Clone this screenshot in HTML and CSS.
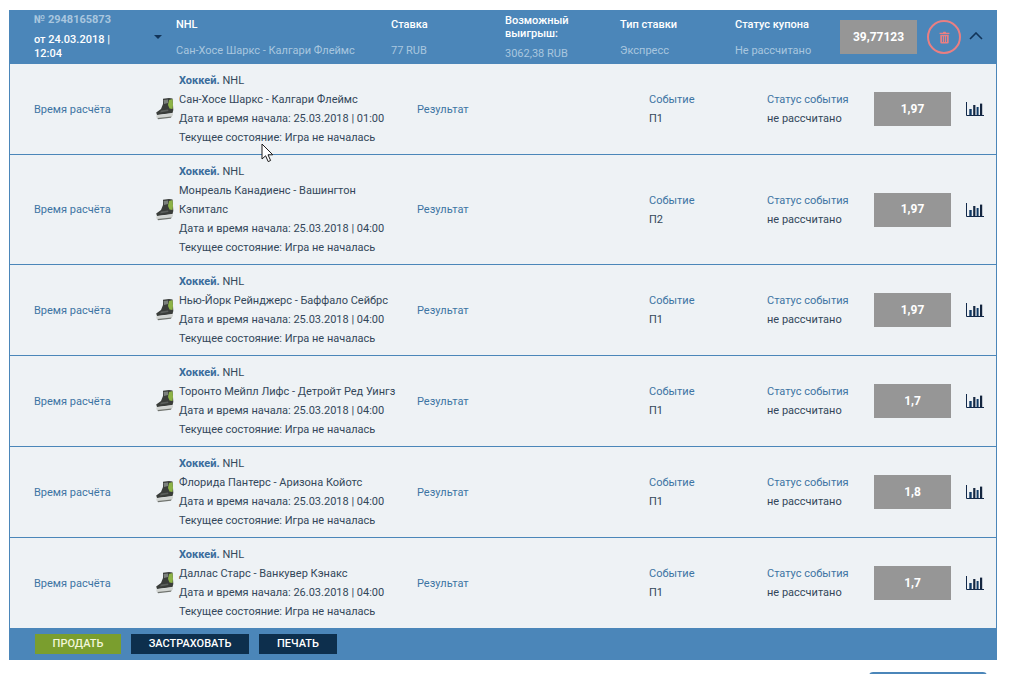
FILE: index.html
```html
<!DOCTYPE html>
<html lang="ru">
<head>
<meta charset="utf-8">
<title>Купон</title>
<link rel="stylesheet" href="styles.css">
</head>
<body>
<svg class="sprites" width="0" height="0" aria-hidden="true">
  <symbol id="skate" viewBox="0 0 22 24">
    <path d="M8 1.8 L14 1 L17.5 1.5 L18 8 L18.3 13 L17.5 16 L2 18 L1.2 15.5 L6 12 L8 7 Z" fill="#3a3d3a"/>
    <path d="M14 3 L17.5 2 L18 8 L17.5 12 L14.5 11.5 L13 8 Z" fill="#8db347"/>
    <path d="M8.5 3 L13 2.5 L13 6 L9 7 Z" fill="#7b807c"/>
    <path d="M6 13.5 L13 12.5 L13.5 14 L5 15.5 Z" fill="#5c605d"/>
    <path d="M1.5 18.2 L18 16.2 L18 18 L16.5 20 L3 21.5 L1.2 20.3 Z" fill="#d2d5d2"/>
    <path d="M2.5 21 L16.5 19.6 L16 20.8 L3 22.2 Z" fill="#70746f"/>
  </symbol>
  <symbol id="chart" viewBox="0 0 18 14">
    <path d="M0.5 0 V13.5 H18" fill="none" stroke="#12294a" stroke-width="1"/>
    <rect x="3.3" y="7" width="2.4" height="6" fill="#0f3a66"/>
    <rect x="7.2" y="3" width="2.2" height="10" fill="#14263f"/>
    <rect x="10.6" y="5" width="2" height="8" fill="#0f3a66"/>
    <rect x="14" y="1.6" width="2.2" height="11.4" fill="#14263f"/>
  </symbol>
</svg>

<main class="coupon">
  <header class="coupon-head">
    <div class="head-num">
      <div class="head-id">№ 2948165873</div>
      <div class="head-date">от 24.03.2018 | 12:04</div>
    </div>
    <div class="head-arrow"><span class="arrow-down"></span></div>
    <div class="head-col head-col-league"><div class="head-title">NHL</div><div class="head-value">Сан-Хосе Шаркс - Калгари Флеймс</div></div>
    <div class="head-col head-col-stake"><div class="head-title">Ставка</div><div class="head-value">77 RUB</div></div>
    <div class="head-col head-col-tall"><div class="head-title">Возможный выигрыш:</div><div class="head-value">3062,38 RUB</div></div>
    <div class="head-col head-col-type"><div class="head-title">Тип ставки</div><div class="head-value">Экспресс</div></div>
    <div class="head-col head-col-status"><div class="head-title">Статус купона</div><div class="head-value">Не рассчитано</div></div>
    <div class="odds-box head-odds">39,77123</div>
    <div class="trash-btn">
      <svg class="trash-icon" viewBox="0 0 12 14"><path d="M4.2 1.9 L4.8 .6 H7.2 L7.8 1.9 H11.4 V3.3 H.6 V1.9 Z" fill="#ea7f82"/><path fill-rule="evenodd" d="M1.4 4 H10.6 V12.4 Q10.6 13.6 9.4 13.6 H2.6 Q1.4 13.6 1.4 12.4 Z M3.3 5.5 V12 H4.2 V5.5 Z M5.55 5.5 V12 H6.45 V5.5 Z M7.8 5.5 V12 H8.7 V5.5 Z" fill="#ea7f82"/></svg>
    </div>
    <svg class="chevron" viewBox="0 0 14 8"><path d="M1 7 L7 1 L13 7" fill="none" stroke="#12355a" stroke-width="1.6"/></svg>
  </header>

  <section class="row">
    <div class="col-time">Время расчёта</div>
    <div class="col-icon"><svg class="skate"><use href="#skate"/></svg></div>
    <div class="col-info"><div><b>Хоккей.</b> NHL</div><div>Сан-Хосе Шаркс - Калгари Флеймс</div><div>Дата и время начала: 25.03.2018 | 01:00</div><div>Текущее состояние: Игра не началась</div></div>
    <div class="col-result">Результат</div>
    <div class="col-event"><div class="label">Событие</div><div>П1</div></div>
    <div class="col-status"><div class="label">Статус события</div><div>не рассчитано</div></div>
    <div class="odds-box">1,97</div>
    <div class="col-chart"><svg class="chart"><use href="#chart"/></svg></div>
  </section>
  <section class="row">
    <div class="col-time">Время расчёта</div>
    <div class="col-icon"><svg class="skate"><use href="#skate"/></svg></div>
    <div class="col-info"><div><b>Хоккей.</b> NHL</div><div>Монреаль Канадиенс - Вашингтон Кэпиталс</div><div>Дата и время начала: 25.03.2018 | 04:00</div><div>Текущее состояние: Игра не началась</div></div>
    <div class="col-result">Результат</div>
    <div class="col-event"><div class="label">Событие</div><div>П2</div></div>
    <div class="col-status"><div class="label">Статус события</div><div>не рассчитано</div></div>
    <div class="odds-box">1,97</div>
    <div class="col-chart"><svg class="chart"><use href="#chart"/></svg></div>
  </section>
  <section class="row">
    <div class="col-time">Время расчёта</div>
    <div class="col-icon"><svg class="skate"><use href="#skate"/></svg></div>
    <div class="col-info"><div><b>Хоккей.</b> NHL</div><div>Нью-Йорк Рейнджерс - Баффало Сейбрс</div><div>Дата и время начала: 25.03.2018 | 04:00</div><div>Текущее состояние: Игра не началась</div></div>
    <div class="col-result">Результат</div>
    <div class="col-event"><div class="label">Событие</div><div>П1</div></div>
    <div class="col-status"><div class="label">Статус события</div><div>не рассчитано</div></div>
    <div class="odds-box">1,97</div>
    <div class="col-chart"><svg class="chart"><use href="#chart"/></svg></div>
  </section>
  <section class="row">
    <div class="col-time">Время расчёта</div>
    <div class="col-icon"><svg class="skate"><use href="#skate"/></svg></div>
    <div class="col-info"><div><b>Хоккей.</b> NHL</div><div>Торонто Мейпл Лифс - Детройт Ред Уингз</div><div>Дата и время начала: 25.03.2018 | 04:00</div><div>Текущее состояние: Игра не началась</div></div>
    <div class="col-result">Результат</div>
    <div class="col-event"><div class="label">Событие</div><div>П1</div></div>
    <div class="col-status"><div class="label">Статус события</div><div>не рассчитано</div></div>
    <div class="odds-box">1,7</div>
    <div class="col-chart"><svg class="chart"><use href="#chart"/></svg></div>
  </section>
  <section class="row">
    <div class="col-time">Время расчёта</div>
    <div class="col-icon"><svg class="skate"><use href="#skate"/></svg></div>
    <div class="col-info"><div><b>Хоккей.</b> NHL</div><div>Флорида Пантерс - Аризона Койотс</div><div>Дата и время начала: 25.03.2018 | 04:00</div><div>Текущее состояние: Игра не началась</div></div>
    <div class="col-result">Результат</div>
    <div class="col-event"><div class="label">Событие</div><div>П1</div></div>
    <div class="col-status"><div class="label">Статус события</div><div>не рассчитано</div></div>
    <div class="odds-box">1,8</div>
    <div class="col-chart"><svg class="chart"><use href="#chart"/></svg></div>
  </section>
  <section class="row row-last">
    <div class="col-time">Время расчёта</div>
    <div class="col-icon"><svg class="skate"><use href="#skate"/></svg></div>
    <div class="col-info"><div><b>Хоккей.</b> NHL</div><div>Даллас Старс - Ванкувер Кэнакс</div><div>Дата и время начала: 26.03.2018 | 04:00</div><div>Текущее состояние: Игра не началась</div></div>
    <div class="col-result">Результат</div>
    <div class="col-event"><div class="label">Событие</div><div>П1</div></div>
    <div class="col-status"><div class="label">Статус события</div><div>не рассчитано</div></div>
    <div class="odds-box">1,7</div>
    <div class="col-chart"><svg class="chart"><use href="#chart"/></svg></div>
  </section>

  <footer class="coupon-foot">
    <button class="btn btn-sell">ПРОДАТЬ</button>
    <button class="btn btn-insure">ЗАСТРАХОВАТЬ</button>
    <button class="btn btn-print">ПЕЧАТЬ</button>
  </footer>
</main>
<div class="next-btn"></div>

<svg class="cursor" viewBox="0 0 14 20"><path d="M1 1 V16 L4.6 12.8 L7.2 18.6 L9.6 17.5 L7 11.8 H11.8 Z" fill="#fff" stroke="#1a1a1a" stroke-width="1"/></svg>
</body>
</html>
```
FILE: styles.css
```css
* { box-sizing: border-box; }
html, body { height: 100%; }
body {
  margin: 0;
  padding: 10px 15px 0 9px;
  overflow: hidden;
  background: #fff;
  font: 11px/19px Roboto, "Liberation Sans", sans-serif;
  color: #33475a;
  position: relative;
}
.sprites { position: absolute; }

.coupon { width: 988px; }

.coupon-head {
  display: flex;
  align-items: center;
  height: 54px;
  padding-left: 25px;
  background: #4b86b9;
  color: #a9c6df;
}
.head-num { width: 100px; line-height: 14px; font-weight: 500; }
.head-id { color: #a9c6df; font-weight: 700; margin-bottom: 6px; }
.head-date { color: #fff; }
.head-arrow { width: 42px; display: flex; justify-content: center; padding-left: 6px; }
.arrow-down {
  width: 0; height: 0;
  border-left: 4px solid transparent;
  border-right: 4px solid transparent;
  border-top: 4px solid #12355a;
}
.head-col { line-height: 13px; }
.head-title { color: #fff; font-weight: 500; margin-bottom: 13px; }
.head-col-league { width: 215px; }
.head-col-stake { width: 114px; }
.head-col-tall { width: 115px; }
.head-col-tall .head-title { margin-bottom: 7px; width: 90px; }
.head-col-type { width: 115px; }
.head-col-status { width: 105px; }

.odds-box {
  flex: none;
  display: flex;
  align-items: center;
  justify-content: center;
  width: 77px;
  height: 34px;
  background: #969696;
  color: #fff;
  font-size: 12px;
  font-weight: 700;
}
.trash-btn {
  flex: none;
  display: flex;
  align-items: center;
  justify-content: center;
  width: 34px;
  height: 34px;
  margin-left: 10px;
  border: 2px solid #ea7f82;
  border-radius: 50%;
}
.trash-icon { width: 11px; height: 13px; }
.chevron { width: 14px; height: 8px; margin: -2px 0 0 8px; }

.row {
  display: flex;
  align-items: center;
  padding: 7px 0 7px 24px;
  background: #eef2f5;
  border-left: 1px solid #4b86b9;
  border-right: 1px solid #4b86b9;
  border-bottom: 1px solid #4b86b9;
}
.row-last { border-bottom: 0; }
.col-time { width: 121px; color: #3d74a3; }
.col-icon { width: 24px; height: 24px; }
.skate { display: block; width: 22px; height: 24px; }
.col-info { width: 238px; padding-right: 16px; }
.col-info b { color: #3a6c9c; font-weight: 700; }
.col-result { width: 232px; color: #3d74a3; }
.col-event { width: 118px; }
.col-status { width: 107px; }
.label { color: #3d74a3; }
.col-chart { display: flex; margin-left: 15px; }
.chart { display: block; width: 18px; height: 14px; }

.coupon-foot {
  display: flex;
  gap: 10px;
  height: 32px;
  padding: 6px 0 6px 26px;
  background: #4b86b9;
}
.btn {
  height: 20px;
  padding: 0;
  border: 0;
  color: #fff;
  font: 500 11px/20px Roboto, "Liberation Sans", sans-serif;
}
.btn-sell { width: 86px; background: #7a9e2e; color: #f2f6d8; }
.btn-insure { width: 118px; background: #0d2f4d; }
.btn-print { width: 78px; background: #0d2f4d; }

.next-btn {
  width: 118px;
  height: 20px;
  margin: 12px 0 0 860px;
  background: #4b86b9;
  border-radius: 4px 4px 0 0;
}

.cursor {
  position: absolute;
  left: 261px;
  top: 143px;
  width: 14px;
  height: 20px;
}
```
